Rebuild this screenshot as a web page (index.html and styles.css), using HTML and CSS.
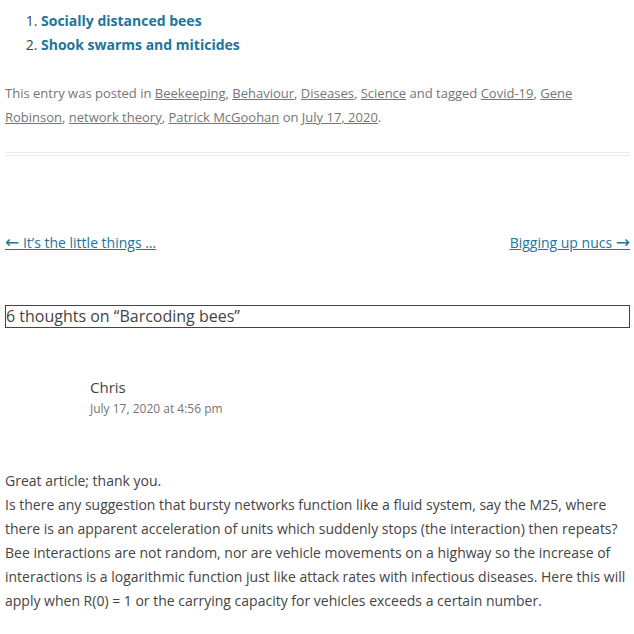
FILE: index.html
```html
<!DOCTYPE html>
<html lang="en">
<head>
<meta charset="utf-8">
<title>Barcoding bees</title>
<link rel="stylesheet" href="styles.css">
</head>
<body>
<main class="page">
  <ol class="related">
    <li><a href="#" class="related-link">Socially distanced bees</a></li>
    <li><a href="#" class="related-link">Shook swarms and miticides</a></li>
  </ol>
  <footer class="entry-meta">
    This entry was posted in <a href="#">Beekeeping</a>, <a href="#">Behaviour</a>, <a href="#">Diseases</a>, <a href="#">Science</a> and tagged <a href="#">Covid-19</a>, <a href="#">Gene Robinson</a>, <a href="#">network theory</a>, <a href="#">Patrick McGoohan</a> on <a href="#">July 17, 2020</a>.
  </footer>
  <div class="rule"></div>
  <nav class="post-nav">
    <a href="#"><span class="arrow">&larr;</span> It’s the little things …</a>
    <a href="#">Bigging up nucs <span class="arrow">&rarr;</span></a>
  </nav>
  <h2 class="comments-title">6 thoughts on “Barcoding bees”</h2>
  <article class="comment">
    <div class="comment-head">
      <div class="author">Chris</div>
      <div class="comment-date">July 17, 2020 at 4:56 pm</div>
    </div>
    <p class="comment-body">Great article; thank you.<br>Is there any suggestion that bursty networks function like a fluid system, say the M25, where there is an apparent acceleration of units which suddenly stops (the interaction) then repeats? Bee interactions are not random, nor are vehicle movements on a highway so the increase of interactions is a logarithmic function just like attack rates with infectious diseases. Here this will apply when R(0) = 1 or the carrying capacity for vehicles exceeds a certain number.</p>
  </article>
</main>
</body>
</html>
```

FILE: styles.css
```css
html, body {
  margin: 0;
  padding: 0;
  background: #fff;
}
body {
  font-family: "Open Sans", "Liberation Sans", sans-serif;
  font-size: 14px;
  line-height: 24px;
  color: #444;
}
.page {
  padding: 9px 4px 0 5px;
}
.related {
  margin: 0;
  padding-left: 36px;
  color: #444;
}
.related-link {
  color: #21759b;
  font-weight: 700;
  text-decoration: none;
}
.entry-meta {
  margin-top: 24px;
  font-size: 13px;
  color: #757575;
}
.entry-meta a {
  color: #757575;
  text-decoration: underline;
}
.rule {
  margin-top: 23px;
  height: 2px;
  border-top: 1px solid #ededed;
  border-bottom: 1px solid #ededed;
}
.post-nav {
  margin-top: 75px;
  height: 24px;
  display: flex;
  justify-content: space-between;
  align-items: flex-start;
}
.post-nav a {
  color: #21759b;
  text-decoration: underline;
  line-height: 24px;
}
.arrow {
  font-family: "DejaVu Sans", sans-serif;
  font-size: 17px;
  line-height: 0;
}
.comments-title {
  margin: 50px 0 0;
  border: 1px solid #e00000;
  font-size: 16px;
  font-weight: 400;
  line-height: 21px;
  color: #444;
}
.comment {
  margin-top: 48px;
}
.comment-head {
  padding-left: 85px;
}
.author {
  font-size: 15px;
  line-height: 22px;
  color: #444;
}
.comment-date {
  font-size: 12px;
  line-height: 21px;
  color: #757575;
}
.comment-body {
  margin: 50px 0 0;
}
```
